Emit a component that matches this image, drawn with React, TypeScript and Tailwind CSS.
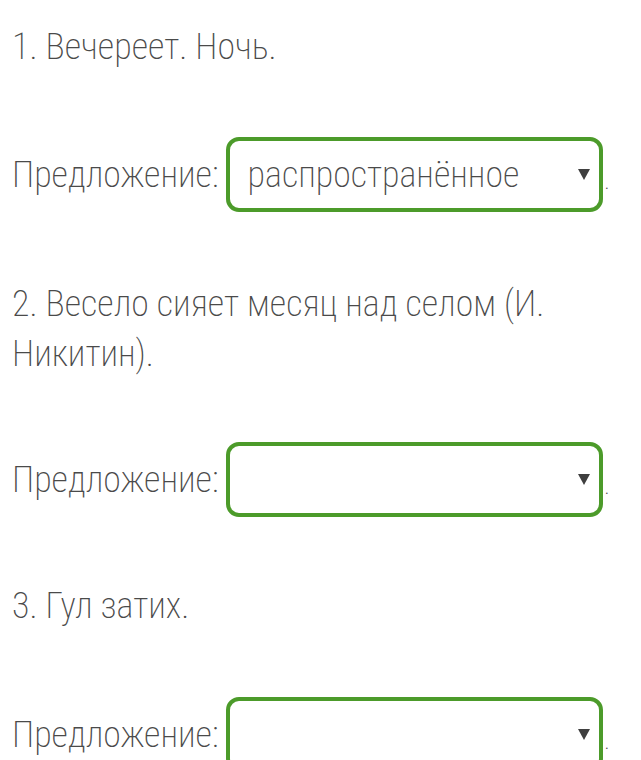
import React from "react";

const font = { fontFamily: "Roboto, 'Noto Sans', sans-serif" };

function Arrow() {
  return (
    <svg width="12" height="12" viewBox="0 0 12 12" className="shrink-0">
      <polygon points="0,0 12,0 6,11" fill="#3f3f3f" />
    </svg>
  );
}

function SelectRow({ value, className }: { value?: string; className: string }) {
  return (
    <div className={`flex items-center ${className}`}>
      <span className="leading-[50px]">Предложение:</span>
      <div className="ml-[7px] flex h-[75px] w-[377px] shrink-0 items-center justify-between rounded-[13px] border-4 border-[#4c9b2a] bg-white pl-[18px] pr-[9px]">
        <span className="leading-[50px]">{value ?? ""}</span>
        <Arrow />
      </div>
      <span className="ml-[2px] mt-[14px] text-[22px] leading-[22px]">.</span>
    </div>
  );
}

export default function App() {
  return (
    <div
      className="min-h-[760px] w-[641px] overflow-hidden bg-white px-3 pt-[22px] text-[36px] font-extralight text-[#4a4a4a] [font-stretch:condensed]"
      style={font}
    >
      <p className="leading-[50px]">1. Вечереет. Ночь.</p>
      <SelectRow value="распространённое" className="mt-[65px]" />
      <p className="mt-[67px] leading-[50px]">2. Весело сияет месяц над селом (И. Никитин).</p>
      <SelectRow className="mt-[63px]" />
      <p className="mt-[64px] leading-[50px]">3. Гул затих.</p>
      <SelectRow className="mt-[66px]" />
    </div>
  );
}
